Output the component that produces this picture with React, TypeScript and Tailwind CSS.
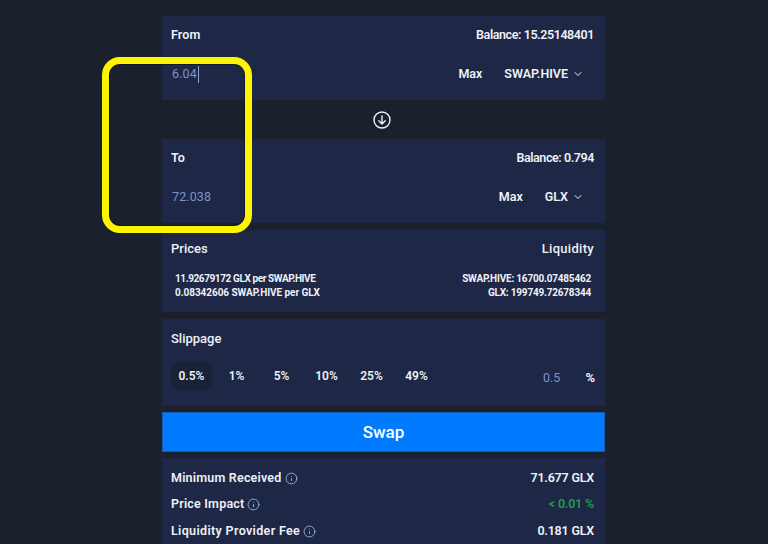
import { ChevronDown, Info } from "lucide-react";

const slippages = ["0.5%", "1%", "5%", "10%", "25%", "49%"];

function TokenPanel(props: { label: string; balance: string; value: string; token: string; caret?: boolean }) {
  return (
    <div className="h-[84px] bg-[#1e2745] px-[9px] pt-[12px]">
      <div className="flex h-[14px] items-center justify-between text-[12.5px] font-semibold text-[#eef1f7]">
        <span className="tracking-[0.1px]">{props.label}</span>
        <span className="pr-[2px] tracking-[-0.42px]">Balance: {props.balance}</span>
      </div>
      <div className="mt-[21px] flex h-[22px] items-center">
        <span className="ml-[1px] text-[12.5px] tracking-[0.1px] text-[#7b93cb]">{props.value}</span>
        {props.caret && <span className="ml-[1px] h-[17px] w-px bg-[#8fa3cf]" />}
        <span className="ml-auto text-[12.5px] font-semibold text-[#eef1f7]">Max</span>
        <span className="ml-[22px] text-[12.5px] font-semibold text-[#eef1f7]">{props.token}</span>
        <ChevronDown className="ml-[4px] mr-[12px] h-[12px] w-[12px] text-[#eef1f7]" strokeWidth={2} />
      </div>
    </div>
  );
}

function InfoRow(props: { label: string; value: string; green?: boolean; wide?: boolean }) {
  return (
    <div className="flex h-[26.5px] items-center justify-between text-[12.5px] font-semibold text-[#eef1f7]">
      <span className="flex items-center gap-[3px]">
        <span className={props.wide ? "tracking-[0.35px]" : "tracking-[0.2px]"}>{props.label}</span>
        <Info className="h-[13px] w-[13px] text-[#8fb4dc]" strokeWidth={1.75} />
      </span>
      <span className={`pr-[2px] tracking-[-0.2px] ${props.green ? "text-[#1f9d45]" : ""}`}>{props.value}</span>
    </div>
  );
}

export default function App() {
  return (
    <div className="relative h-[544px] w-[768px] overflow-hidden bg-[#1a202c] font-['Roboto',sans-serif]">
      <div className="ml-[162px] w-[443px] pt-[16px]">
        <TokenPanel label="From" balance="15.25148401" value="6.04" token="SWAP.HIVE" caret />

        <div className="flex h-[39px] items-center justify-center pr-[3px]">
          <svg width="18" height="18" viewBox="0 0 18 18" fill="none" stroke="#eef1f7" strokeWidth="1.4" strokeLinecap="round" strokeLinejoin="round">
            <circle cx="9" cy="9" r="8" />
            <path d="M9 5v8M5.8 9.8 9 13l3.2-3.2" />
          </svg>
        </div>

        <TokenPanel label="To" balance="0.794" value="72.038" token="GLX" />

        <div className="mt-[7px] h-[82px] bg-[#1e2745] px-[9px] pt-[9px] text-[#eef1f7]">
          <div className="flex justify-between pr-[2px] text-[13px] font-medium">
            <span>Prices</span>
            <span className="tracking-[0.3px]">Liquidity</span>
          </div>
          <div className="mt-[13px] flex justify-between px-[4px] text-[10px] font-bold leading-[14px]">
            <div>
              <div className="tracking-[-0.4px]">11.92679172 GLX per SWAP.HIVE</div>
              <div className="tracking-[-0.05px]">0.08342606 SWAP.HIVE per GLX</div>
            </div>
            <div className="pr-[1px] text-right tracking-[-0.2px]">
              <div>SWAP.HIVE: 16700.07485462</div>
              <div>GLX: 199749.72678344</div>
            </div>
          </div>
        </div>

        <div className="mt-[7px] h-[87px] bg-[#1e2745] px-[9px] pt-[10px]">
          <div className="text-[13px] font-medium text-[#eef1f7]">Slippage</div>
          <div className="mt-[13px] flex items-center gap-[4px]">
            {slippages.map((s, i) => (
              <span
                key={s}
                className={`flex h-[28px] w-[41px] items-center justify-center rounded-[8px] text-[12px] font-semibold text-[#eef1f7] ${i === 0 ? "bg-[#1a2238]" : ""}`}
              >
                {s}
              </span>
            ))}
            <span className="ml-auto mt-[5px] text-[12.5px] text-[#7b93cb]">0.5</span>
            <span className="ml-[21px] mr-[1px] mt-[5px] text-[13px] font-bold text-[#eef1f7]">%</span>
          </div>
        </div>

        <button className="mt-[6px] block h-[40px] w-full border border-[#0f5fb5] bg-[#007bff] pt-[1px] text-[17px] font-medium text-white">
          Swap
        </button>

        <div className="mt-[6px] h-[100px] bg-[#1e2745] px-[9px] pt-[7px]">
          <InfoRow label="Minimum Received" value="71.677 GLX" />
          <InfoRow label="Price Impact" value="< 0.01 %" green />
          <InfoRow label="Liquidity Provider Fee" value="0.181 GLX" wide />
        </div>
      </div>

      {/* marker box drawn over the screenshot */}
      <div className="absolute left-[102px] top-[57px] h-[176px] w-[150px] rounded-[18px] border-[7px] border-[#fdf500] shadow-[inset_0_0_0_1px_rgba(0,0,0,0.35)]" />
    </div>
  );
}
